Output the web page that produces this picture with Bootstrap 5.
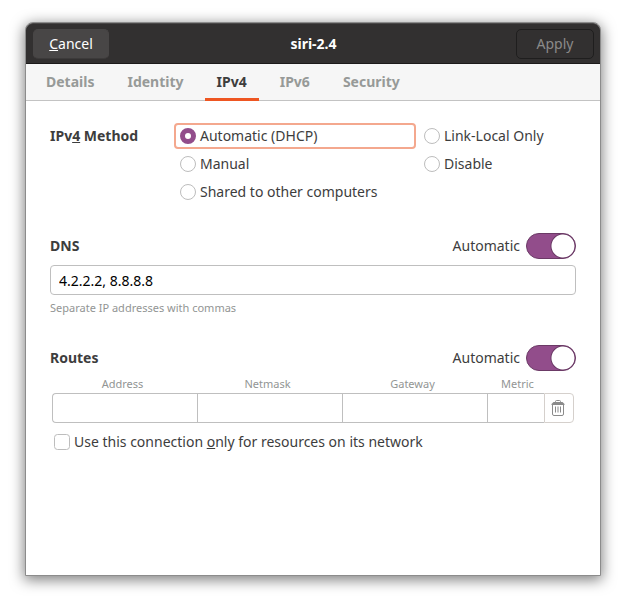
<!DOCTYPE html>
<html lang="en">
<head>
<meta charset="utf-8">
<meta name="viewport" content="width=device-width, initial-scale=1">
<title>siri-2.4</title>
<link href="https://cdn.jsdelivr.net/npm/bootstrap@5.3.0/dist/css/bootstrap.min.css" rel="stylesheet">
<style>
  body { font-family: "Noto Sans", "Open Sans", sans-serif; font-size: 14px; line-height: 20px; color: #3d3d3d; background: #fff; padding: 22px 25px 28px; }
  .window { border: 1px solid #8c8c8c; border-radius: 8px 8px 0 0; background: #fff; box-shadow: 0 3px 14px 1px rgba(0,0,0,.5); }
  .titlebar { background: #323030; border-top: 1px solid #4a4848; border-bottom: 1px solid #1c1b1b; border-radius: 7px 7px 0 0; height: 41px; padding: 0 6px 0 7px; display: grid; grid-template-columns: 1fr auto 1fr; align-items: center; color: #fff; }
  .titlebar h1 { font-size: 14px; line-height: 20px; }
  .bar-btn { font-size: 14px; line-height: 20px; height: 30px; border-radius: 5px; padding: 0; }
  .bar-cancel { width: 76px; background: #484646; border: 1px solid #484646; border-bottom-color: #3c3a3a; color: #fff; }
  .bar-apply, .bar-apply:disabled { width: 78px; background: #323030; border: 1px solid #1f1e1e; color: #8b8a89; opacity: 1; }
  .tabs { background: #f6f6f6; border-bottom: 1px solid #c3c3c3; padding: 0 8px; gap: 9px; }
  .tabs .nav-link { color: #979a98; font-weight: 700; background: transparent; padding: 8px 12px 6px; border: 0; border-radius: 0; border-bottom: 3px solid transparent; margin-bottom: -1px; }
  .tabs .nav-link.active { color: #3d3d3d; border-bottom-color: #ee5622; }
  .pane { padding: 22px 24px; }
  .heading { font-size: 14px; line-height: 20px; font-weight: 700; margin: 0; }
  .method { display: grid; grid-template-columns: 124px minmax(0, 242px) minmax(0, 1fr); margin-bottom: 28px; }
  .method .heading { line-height: 26px; }
  .choices { display: flex; flex-direction: column; gap: 2px; }
  .choice { display: flex; align-items: center; height: 26px; padding: 0 4px; border: 2px solid transparent; border-radius: 4px; white-space: nowrap; }
  .choice.focused { border-color: #f4a88e; }
  .choice input, .only input { width: 16px; height: 16px; margin: 0 4px 0 0; flex: none; border: 1px solid #bdbdbd; background-color: #fff; }
  .choice input:checked { border: 5px solid #924d8b; background: #fff; }
  .right-col { padding-left: 6px; }
  .only input { border-radius: 3px; }
  .form-check-input.sw { width: 50px; height: 26px; margin: 0; flex: none; border: 1px solid #6b3a66; border-radius: 13px; background: radial-gradient(circle at 36px 12px, #fff 11px, #6b3a66 12px, transparent 13px) #924d8b; }
  .section-head { height: 26px; }
  .auto-label { gap: 6px; }
  .dns-box { height: 30px; font-size: 14px; line-height: 20px; padding: 0 8px; margin-top: 6px; border: 1px solid #bfbfbf; border-radius: 4px; color: #000; }
  .note { font-size: 11px; line-height: 16px; color: #929594; }
  .dns-note { margin-top: 5px; margin-bottom: 29px; }
  .routes { table-layout: fixed; border-collapse: separate; border-spacing: 0; margin: 0 0 9px; }
  .routes-wrap { padding: 0 2px; margin-top: 5px; }
  .routes th { font-weight: 400; text-align: center; padding: 0 4px 1px 0; }
  .routes th.c-metric { padding: 0 0 1px 4px; }
  .routes td { padding: 0; }
  .c-metric { width: 57px; }
  .c-delete { width: 30px; }
  .cell { display: block; width: 100%; height: 30px; border: 1px solid #bfbfbf; border-right: 0; border-radius: 0; padding: 0 8px; }
  td:first-child .cell { border-radius: 4px 0 0 4px; }
  .cell-btn { width: 30px; height: 30px; display: flex; align-items: center; justify-content: center; padding: 0 2px 0 0; background: #fff; border: 1px solid #d5d0cc; border-radius: 0 4px 4px 0; }
  .only { padding-left: 4px; }
</style>
<script src="https://cdn.jsdelivr.net/npm/bootstrap@5.3.0/dist/js/bootstrap.bundle.min.js"></script>
</head>
<body class="d-flex flex-column min-vh-100">
<main class="window flex-grow-1">
  <header class="titlebar">
    <div><button type="button" class="btn bar-btn bar-cancel"><u>C</u>ancel</button></div>
    <h1 class="m-0 fw-bold">siri-2.4</h1>
    <div class="text-end"><button type="button" class="btn bar-btn bar-apply" disabled>Apply</button></div>
  </header>
  <nav class="nav tabs" role="tablist">
    <button type="button" class="nav-link" role="tab">Details</button>
    <button type="button" class="nav-link" role="tab">Identity</button>
    <button type="button" class="nav-link active" role="tab" aria-selected="true">IPv4</button>
    <button type="button" class="nav-link" role="tab">IPv6</button>
    <button type="button" class="nav-link" role="tab">Security</button>
  </nav>
  <form class="pane">
    <div class="method" role="radiogroup" aria-labelledby="method-label">
      <h2 class="heading" id="method-label">IPv<u>4</u> Method</h2>
      <div class="choices">
        <label class="choice focused"><input class="form-check-input" type="radio" name="method" checked>Automatic (DHCP)</label>
        <label class="choice"><input class="form-check-input" type="radio" name="method">Manual</label>
        <label class="choice"><input class="form-check-input" type="radio" name="method">Shared to other computers</label>
      </div>
      <div class="choices right-col">
        <label class="choice px-0"><input class="form-check-input" type="radio" name="method">Link-Local Only</label>
        <label class="choice px-0"><input class="form-check-input" type="radio" name="method">Disable</label>
      </div>
    </div>

    <div class="section-head d-flex align-items-center justify-content-between">
      <label class="heading" for="dns">DNS</label>
      <label class="auto-label d-flex align-items-center">Automatic<input class="form-check-input sw" type="checkbox" role="switch" checked></label>
    </div>
    <input type="text" id="dns" class="form-control dns-box" value="4.2.2.2, 8.8.8.8">
    <div class="note dns-note">Separate IP addresses with commas</div>

    <div class="section-head d-flex align-items-center justify-content-between">
      <h2 class="heading">Routes</h2>
      <label class="auto-label d-flex align-items-center">Automatic<input class="form-check-input sw" type="checkbox" role="switch" checked></label>
    </div>
    <div class="routes-wrap">
      <table class="routes w-100">
        <colgroup><col><col><col><col class="c-metric"><col class="c-delete"></colgroup>
        <thead><tr class="note"><th scope="col">Address</th><th scope="col">Netmask</th><th scope="col">Gateway</th><th scope="col" class="c-metric">Metric</th><td></td></tr></thead>
        <tbody><tr>
          <td><input type="text" class="cell" aria-label="Address"></td>
          <td><input type="text" class="cell" aria-label="Netmask"></td>
          <td><input type="text" class="cell" aria-label="Gateway"></td>
          <td><input type="text" class="cell" aria-label="Metric"></td>
          <td><button type="button" class="cell-btn" aria-label="Delete route">
            <svg width="14" height="16" viewBox="0 0 14 16" fill="none" stroke="#8b8b8b"><path d="M4.5 2.5V1.5Q4.5 .5 5.5 .5h3q1 0 1 1v1"/><path d="M.5 5V4L2.500 2h9L13.500 4V5z" fill="#8b8b8b" stroke="none"/><path d="M1.500 4.500V14q0 1.500 1.500 1.500h8q1.500 0 1.500-1.500V4.500M4.500 6.500v6M7 6.500v6M9.500 6.500v6"/></svg>
          </button></td>
        </tr></tbody>
      </table>
    </div>
    <label class="only d-flex align-items-center"><input class="form-check-input" type="checkbox"><span>Use this connection <u>o</u>nly for resources on its network</span></label>
  </form>
</main>
</body>
</html>
